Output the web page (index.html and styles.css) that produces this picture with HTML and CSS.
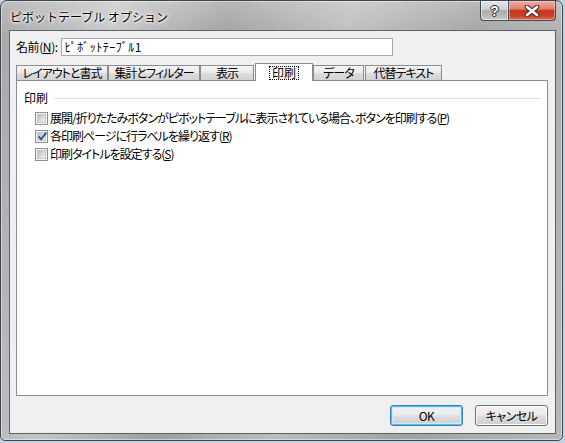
FILE: index.html
```html
<!DOCTYPE html>
<html lang="ja">
<head>
<meta charset="utf-8">
<title>ピボットテーブル オプション</title>
<link rel="stylesheet" href="styles.css">
</head>
<body>
<div class="window">
  <div class="titlebar">
    <div class="title">ピボットテーブル オプション</div>
    <div class="caption-buttons">
      <div class="cap-btn help"><span class="help-glyph">?</span></div>
      <div class="cap-btn close">
        <svg width="16" height="12" viewBox="0 0 16 12">
          <path d="M3 2 L13 10 M13 2 L3 10" stroke="#3a2a28" stroke-width="4.6" stroke-linecap="round"/>
          <path d="M3 2 L13 10 M13 2 L3 10" stroke="#ffffff" stroke-width="2.6" stroke-linecap="round"/>
        </svg>
      </div>
    </div>
  </div>
  <div class="client">
    <div class="name-row">
      <span class="name-label">名前(<u>N</u>):</span>
      <div class="textbox">ﾋﾟﾎﾞｯﾄﾃｰﾌﾞﾙ1</div>
    </div>
    <div class="tabs">
      <div class="tab t1">レイアウトと書式</div>
      <div class="tab t2">集計とフィルター</div>
      <div class="tab t3">表示</div>
      <div class="tab active"><span class="focus">印刷</span></div>
      <div class="tab t5">データ</div>
      <div class="tab t6">代替テキスト</div>
    </div>
    <div class="panel">
      <div class="group-head"><span>印刷</span><div class="rule"></div></div>
      <div class="checks">
        <div class="check-row">
          <span class="cb"><span class="cb-inner"></span></span>
          <span>展開/折りたたみボタンがピボットテーブルに表示されている場合、ボタンを印刷する(<u>P</u>)</span>
        </div>
        <div class="check-row">
          <span class="cb"><span class="cb-inner">
            <svg class="tick" width="11" height="11" viewBox="0 0 11 11">
              <path d="M1.6 5.4 L4.1 8.3 L9.3 1.6" fill="none" stroke="#33518f" stroke-width="1.9"/>
            </svg>
          </span></span>
          <span>各印刷ページに行ラベルを繰り返す(<u>R</u>)</span>
        </div>
        <div class="check-row">
          <span class="cb"><span class="cb-inner"></span></span>
          <span>印刷タイトルを設定する(<u>S</u>)</span>
        </div>
      </div>
    </div>
    <div class="buttons">
      <div class="btn default">OK</div>
      <div class="btn">キャンセル</div>
    </div>
  </div>
</div>
</body>
</html>
```

FILE: styles.css
```css
* {
  box-sizing: border-box;
}

html, body {
  margin: 0;
  padding: 0;
}

body {
  width: 565px;
  height: 443px;
  overflow: hidden;
  background: #c4d3e2;
  font-family: "Noto Sans CJK JP", "Noto Sans", sans-serif;
  font-size: 12px;
  color: #000;
  font-feature-settings: "palt";
}

.window {
  width: 563px;
  height: 441px;
  border: 1px solid #3d4650;
  border-radius: 7px 7px 5px 5px;
  background:
    linear-gradient(180deg, rgba(255,255,255,0.25), rgba(255,255,255,0) 40px),
    linear-gradient(100deg, #a6a6a6 0%, #c6c6c6 18%, #9f9f9f 36%, #bdbdbd 55%, #a2a2a2 75%, #b8b8b8 100%);
  box-shadow: inset 0 0 0 1px rgba(255,255,255,0.45);
  display: flex;
  flex-direction: column;
  padding: 0 6px 6px 8px;
}

.titlebar {
  height: 29px;
  display: flex;
  align-items: flex-start;
  flex: none;
}

.title {
  margin-left: 1px;
  padding-top: 8px;
  line-height: 16px;
  font-size: 12px;
  font-feature-settings: normal;
  color: #000;
  text-shadow: 0 0 5px #fff, 0 0 3px #fff, 0 0 2px #fff;
}

.caption-buttons {
  margin-left: auto;
  display: flex;
}

.cap-btn {
  height: 20px;
  border: 1px solid #454c56;
  border-top: none;
  display: flex;
  align-items: center;
  justify-content: center;
}

.help {
  width: 28px;
  border-right: none;
  border-radius: 0 0 0 4px;
  background: linear-gradient(180deg, #e6e6e6 0%, #cfcfcf 45%, #acacac 50%, #b9b9b9 80%, #cdcdcd 100%);
  box-shadow: inset 0 0 0 1px rgba(255,255,255,0.5);
}

.help-glyph {
  font-family: "Liberation Sans", sans-serif;
  font-weight: bold;
  font-size: 14px;
  line-height: 14px;
  color: #fff;
  text-shadow: 1px 0 0 #2a2a2a, -1px 0 0 #2a2a2a, 0 1px 0 #2a2a2a, 0 -1px 0 #2a2a2a;
}

.close {
  width: 48px;
  border-radius: 0 0 4px 0;
  background: linear-gradient(180deg, #eeb0a2 0%, #de7f6a 42%, #c7381f 50%, #c94128 78%, #e07358 100%);
  box-shadow: inset 0 0 0 1px rgba(255,220,210,0.45);
}

.client {
  flex: 1;
  display: flex;
  flex-direction: column;
  background: #f0f0f0;
  border: 1px solid #59626c;
  padding: 7px 7px 7px 6px;
}

.name-row {
  display: flex;
  align-items: center;
  height: 18px;
  flex: none;
}

.name-label {
  line-height: 16px;
  letter-spacing: -0.4px;
}

.textbox {
  margin-left: 3px;
  width: 332px;
  height: 18px;
  border: 1px solid #a5a8ae;
  background: #fff;
  padding-left: 3px;
  line-height: 16px;
  letter-spacing: 0.5px;
}

.tabs {
  margin-top: 7px;
  height: 17px;
  display: flex;
  align-items: flex-end;
  flex: none;
  position: relative;
  z-index: 1;
}

.tab {
  height: 15px;
  border: 1px solid #898c95;
  border-bottom: none;
  padding: 0;
  background: linear-gradient(180deg, #f4f4f4 0%, #ebebeb 48%, #dddddd 52%, #d2d2d2 100%);
  line-height: 13px;
  text-align: center;
  white-space: nowrap;
  letter-spacing: -1px;
}

.t1, .t2 { width: 92px; }
.t3 { width: 54px; }
.t5 { width: 51px; }
.t6 { width: 77px; margin-left: 1px; }

.tab.active {
  width: 58px;
  height: 18px;
  margin-left: 1px;
  margin-bottom: -1px;
  background: #fff;
  padding: 2px 0 0;
  display: flex;
  justify-content: center;
  align-items: flex-start;
  letter-spacing: 0;
}

.focus {
  border: 1px dotted #000;
  padding: 0 2px;
  line-height: 12px;
  height: 14px;
}

.panel {
  flex: 1;
  border: 1px solid #898c95;
  background: #fff;
  padding: 10px 6px 0 7px;
}

.group-head {
  display: flex;
  align-items: center;
  height: 14px;
  line-height: 14px;
}

.rule {
  flex: 1;
  height: 1px;
  margin-left: 6px;
  background: #d5dfe5;
}

.checks {
  margin-top: 4px;
  margin-left: 11px;
}

.check-row {
  display: flex;
  align-items: center;
  height: 18px;
  line-height: 16px;
  white-space: nowrap;
  letter-spacing: -1px;
}

.cb {
  flex: none;
  width: 13px;
  height: 13px;
  border: 1px solid #8e8f8f;
  background: #f4f4f4;
  padding: 1px;
  margin-right: 2px;
}

.cb-inner {
  display: block;
  width: 9px;
  height: 9px;
  position: relative;
  background: linear-gradient(135deg, #b6bac0 0%, #d9dbde 55%, #f2f2f2 100%);
  border: 1px solid #c5c8cc;
}

.tick {
  position: absolute;
  left: -1px;
  top: -2px;
  overflow: visible;
}

.buttons {
  margin-top: 9px;
  display: flex;
  justify-content: flex-end;
  gap: 12px;
  flex: none;
}

.btn {
  width: 73px;
  height: 21px;
  border: 1px solid #707070;
  border-radius: 3px;
  background: linear-gradient(180deg, #f2f2f2 0%, #ebebeb 48%, #dddddd 52%, #cfcfcf 100%);
  box-shadow: inset 0 0 0 1px #fcfcfc;
  display: flex;
  align-items: center;
  justify-content: center;
  line-height: 16px;
  letter-spacing: -0.5px;
}

.btn.default {
  border-color: #3c7fb1;
  box-shadow: inset 0 0 0 1px #4cc4f2, inset 0 0 0 2px #c8ecfb;
}
```
